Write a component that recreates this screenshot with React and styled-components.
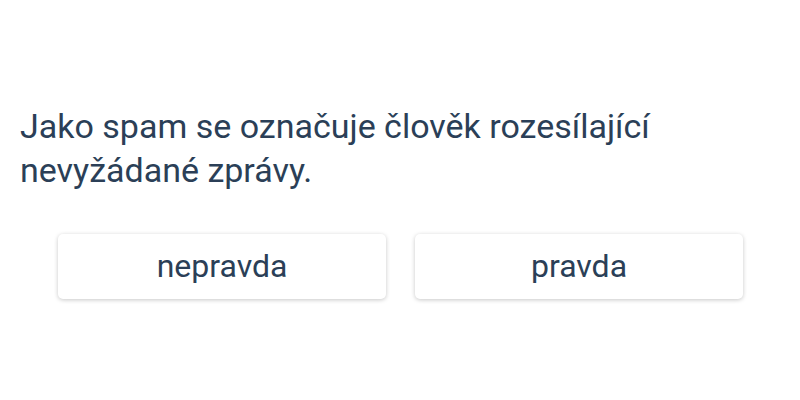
import styled, { createGlobalStyle } from "styled-components";

const GlobalStyle = createGlobalStyle`
  html, body {
    margin: 0;
    padding: 0;
    background: #ffffff;
  }
  body {
    font-family: Roboto, "Liberation Sans", sans-serif;
    color: #2b3f57;
  }
`;

export default function App() {
  return (
    <>
      <GlobalStyle />
      <QuizStyled>
        <p className="question">
          Jako spam se označuje člověk rozesílající nevyžádané zprávy.
        </p>
        <div className="answers">
          <AnswerButton>nepravda</AnswerButton>
          <AnswerButton>pravda</AnswerButton>
        </div>
      </QuizStyled>
    </>
  );
}

const QuizStyled = styled.div`
  height: 400px;
  box-sizing: border-box;
  padding: 2px 20px 0;
  display: flex;
  flex-direction: column;
  justify-content: center;

  .question {
    margin: 0 0 42px 0;
    max-width: 700px;
    font-size: 34px;
    line-height: 44px;
    color: #2b3f57;
  }

  .answers {
    display: flex;
    gap: 29px;
    padding: 0 37px 0 38px;
  }
`;

const AnswerButton = styled.button`
  flex: 1 1 0;
  height: 65px;
  border: none;
  border-radius: 5px;
  background: #ffffff;
  box-shadow: 0 1px 4px rgba(0, 0, 0, 0.22);
  font-family: Roboto, "Liberation Sans", sans-serif;
  font-size: 32px;
  color: #2b3f57;
  cursor: pointer;
`;
